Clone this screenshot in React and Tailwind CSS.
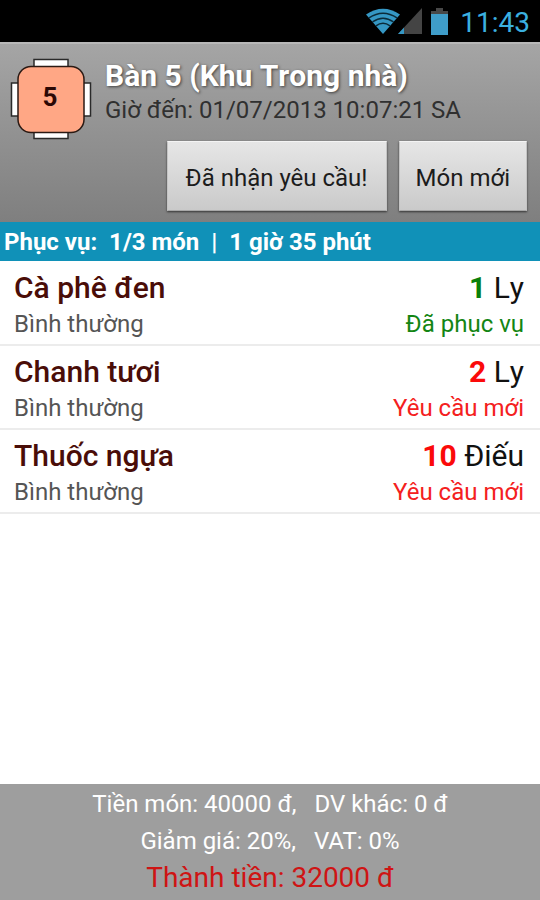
import React from "react";

const dishes = [
  { name: "Cà phê đen", note: "Bình thường", qty: 1, unit: "Ly", status: "Đã phục vụ", served: true },
  { name: "Chanh tươi", note: "Bình thường", qty: 2, unit: "Ly", status: "Yêu cầu mới", served: false },
  { name: "Thuốc ngựa", note: "Bình thường", qty: 10, unit: "Điếu", status: "Yêu cầu mới", served: false },
];

function WifiIcon() {
  return (
    <svg width="34" height="26" viewBox="0 0 34 26" aria-hidden="true" className="-mr-0.5">
      <path d="M0 6.500 Q17 -5 34 6.500 L17 26 Z" fill="#3597c4" />
      <g fill="none" stroke="#0b2a38" strokeWidth="1.5">
        <path d="M3 9.800 Q17 0.500 31 9.800" />
        <path d="M6.500 13.800 Q17 6.500 27.500 13.800" />
        <path d="M10 17.800 Q17 12.800 24 17.800" />
      </g>
    </svg>
  );
}

function SignalIcon() {
  return (
    <svg width="24" height="26" viewBox="0 0 24 26" aria-hidden="true">
      <path d="M24 0 V26 H0 Z" fill="#444444" />
      <path d="M6 19.500 V26 H0 Z" fill="#3597c4" />
    </svg>
  );
}

function BatteryIcon() {
  return (
    <svg width="17" height="27" viewBox="0 0 17 27" aria-hidden="true">
      <path d="M5 0 H12 V3 H17 V6 H0 V3 H5 Z" fill="#484848" />
      <rect x="0" y="6" width="17" height="21" fill="#3f9dc9" />
    </svg>
  );
}

function TableIcon() {
  return (
    <svg width="82" height="82" viewBox="0 0 82 82" role="img" aria-label="Bàn 5" className="shrink-0">
      <g fill="#ffffff" stroke="#2a2a2a" strokeWidth="1.5">
        <rect x="24" y="1.500" width="34" height="12" />
        <rect x="24" y="68" width="34" height="12.500" />
        <rect x="1.500" y="25" width="12" height="33" />
        <rect x="68" y="25" width="12.500" height="33" />
      </g>
      <rect x="8" y="8.500" width="66" height="66" rx="13" fill="#ffa785" stroke="#2b1a14" strokeWidth="1.5" />
      <text x="40" y="48" textAnchor="middle" fontSize="26" fontWeight="700" fill="#2a0805">5</text>
    </svg>
  );
}

function HeaderButton({ children }) {
  return (
    <button
      type="button"
      className="h-[70px] border border-t-[#f4f4f4] border-x-[#c4c4c4] border-b-[#a8a8a8] bg-linear-to-b from-[#e6e6e6] to-[#cacaca] px-4 pt-1 text-2xl text-[#1c1c1c] shadow-[0_1px_2px_rgba(0,0,0,0.6)] first:min-w-[220px]"
    >
      {children}
    </button>
  );
}

export default function App() {
  return (
    <div className="flex min-h-screen flex-col bg-white font-[Roboto,'Noto_Sans',sans-serif]">
      <div className="flex h-[42px] items-center justify-end bg-black pr-[10px]">
        <WifiIcon />
        <SignalIcon />
        <span className="pr-3 pl-[9px]"><BatteryIcon /></span>
        <time className="pt-1 text-[28px] leading-[38px] text-[#3bb0e0]">11:43</time>
      </div>

      <header className="h-[180px] border-t-2 border-[#b8b8b8] bg-linear-to-b from-[#a5a5a5] to-[#7f7f7f]">
        <div className="flex h-[97px] gap-[13px] pt-[14px] pl-[10px]">
          <TableIcon />
          <div>
            <h1 className="text-[30px] leading-9 font-bold text-white [font-kerning:none] [text-shadow:1px_1px_3px_rgba(0,0,0,0.6)]">Bàn 5 (Khu Trong nhà)</h1>
            <p className="text-2xl leading-8 text-[#303030]">Giờ đến: 01/07/2013 10:07:21 SA</p>
          </div>
        </div>
        <div className="flex justify-end gap-3 pr-[13px]">
          <HeaderButton>Đã nhận yêu cầu!</HeaderButton>
          <HeaderButton>Món mới</HeaderButton>
        </div>
      </header>

      <p className="h-[39px] bg-[#1091b8] pl-1 text-2xl leading-[41px] font-bold whitespace-pre text-white">Phục vụ:  1/3 món  |  1 giờ 35 phút</p>

      <ul className="flex-1 pt-px">
        {dishes.map((dish) => (
          <li key={dish.name} className="flex h-[84px] justify-between border-b-2 border-[#ececec] pr-4 pl-[14px]">
            <div>
              <h2 className="pt-1 text-[30px] leading-11 font-medium text-[#4a0d08]">{dish.name}</h2>
              <p className="text-2xl leading-7 text-[#555555]">{dish.note}</p>
            </div>
            <div className="text-right">
              <p className="pt-1 text-[30px] leading-11 text-[#111111] [font-kerning:none]">
                <b className={dish.served ? "text-[#0a800a]" : "text-[#fb0a0a]"}>{dish.qty}</b> {dish.unit}
              </p>
              <p className={dish.served ? "text-2xl leading-7 text-[#138513]" : "text-2xl leading-7 text-[#f42020]"}>{dish.status}</p>
            </div>
          </li>
        ))}
      </ul>

      <footer className="h-[116px] bg-[#9e9e9e] pt-px text-center text-white">
        <p className="text-2xl leading-[38px] whitespace-pre">Tiền món: 40000 đ,   DV khác: 0 đ</p>
        <p className="text-2xl leading-9 whitespace-pre">Giảm giá: 20%,   VAT: 0%</p>
        <p className="text-[28px] leading-[38px] text-[#cf1414]">Thành tiền: 32000 đ</p>
      </footer>
    </div>
  );
}
